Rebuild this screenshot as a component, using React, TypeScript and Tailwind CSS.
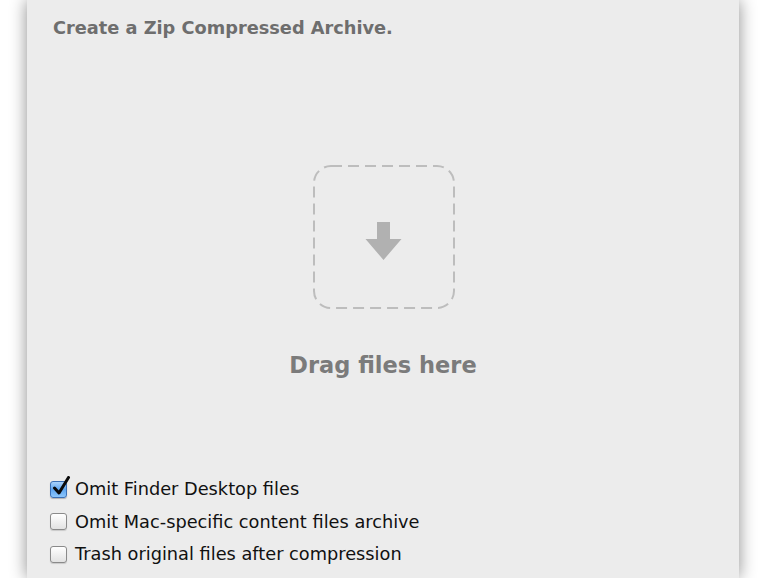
import React from 'react';

const FONT = { fontFamily: '"DejaVu Sans", "Liberation Sans", sans-serif' };

function CheckBox({ checked }: { checked: boolean }) {
  if (checked) {
    return (
      <span className="relative inline-block h-[17px] w-[17px] shrink-0 rounded-[3px] border border-[#3a6fb5] bg-gradient-to-b from-[#a8d2fb] via-[#5fa6f0] to-[#8cc6fb] shadow-[0_1px_1px_rgba(0,0,0,0.25)]">
        <svg className="absolute left-[1px] top-[-6px]" width="19" height="20" viewBox="0 0 19 20">
          <path d="M2.5 12 L7 17 L16.5 1.5" fill="none" stroke="#0a0a0a" strokeWidth="3" strokeLinecap="round" strokeLinejoin="round" />
        </svg>
      </span>
    );
  }
  return (
    <span className="inline-block h-[17px] w-[17px] shrink-0 rounded-[3px] border border-[#8a8a8a] bg-gradient-to-b from-[#ffffff] to-[#e2e2e2] shadow-[0_1px_1px_rgba(0,0,0,0.15)]" />
  );
}

export default function App() {
  const options = [
    { label: 'Omit Finder Desktop files', checked: true },
    { label: 'Omit Mac-specific content files archive', checked: false },
    { label: 'Trash original files after compression', checked: false },
  ];

  return (
    <div className="h-[578px] w-[770px] overflow-hidden bg-white" style={FONT}>
      <div className="ml-[27px] flex h-full w-[712px] flex-col bg-[#ececec] shadow-[0_0_16px_rgba(0,0,0,0.45)]">
        <h1 className="pl-[26px] pt-[17px] text-[17.75px] font-bold leading-[22px] text-[#6e6e6e]">
          Create a Zip Compressed Archive.
        </h1>

        <div className="mt-[126px] flex flex-col items-center">
          <svg width="142" height="144" viewBox="0 0 142 144" className="ml-[2px]">
            <rect x="1" y="1" width="140" height="142" rx="17" fill="none" stroke="#bdbdbd" strokeWidth="2" strokeDasharray="11 6" />
            <path d="M64 57 H77 V74 H88.5 L70.5 95 L52.5 74 H64 Z" fill="#b1b1b1" />
          </svg>
          <p className="mt-[41px] text-[22.5px] font-bold leading-[30px] text-[#7b7b7b]">Drag files here</p>
        </div>

        <div className="mt-auto flex flex-col gap-[12.5px] pb-[14px] pl-[23px]">
          {options.map((o) => (
            <label key={o.label} className="flex items-center gap-[8px] text-[17.75px] leading-[20px] text-[#111]">
              <CheckBox checked={o.checked} />
              <span>{o.label}</span>
            </label>
          ))}
        </div>
      </div>
    </div>
  );
}
